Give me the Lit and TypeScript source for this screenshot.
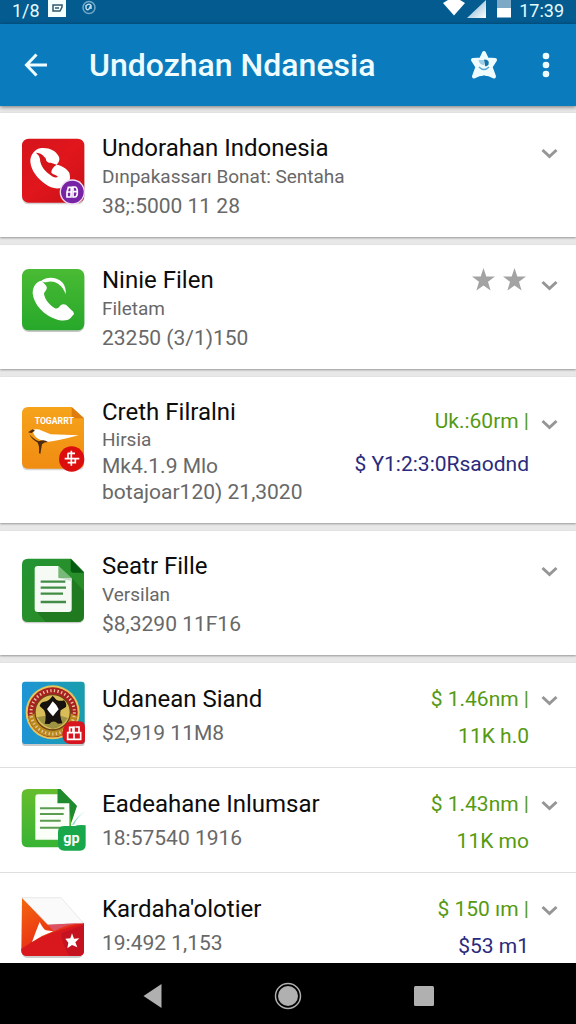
import { LitElement, html, css, svg, nothing, TemplateResult } from "lit";
import { customElement, property } from "lit/decorators.js";

type Tone = "green" | "navy";

interface Entry {
  icon: string;
  name: string;
  sub?: string;
  lines: string[];
  amounts?: { text: string; tone: Tone }[];
  stars?: number;
  dense?: boolean;
}

const cards: Entry[] = [
  { icon: "redPhone", name: "Undorahan Indonesia", sub: "Dınpakassarı Bonat: Sentaha", lines: ["38;:5000 11 28"] },
  { icon: "greenPhone", name: "Ninie Filen", sub: "Filetam", lines: ["23250 (3/1)150"], stars: 2 },
  {
    icon: "bird",
    name: "Creth Filralni",
    sub: "Hirsia",
    lines: ["Mk4.1.9 Mlo", "botajoar120) 21,3020"],
    amounts: [
      { text: "Uk.:60rm |", tone: "green" },
      { text: "$ Y1:2:3:0Rsaodnd", tone: "navy" },
    ],
    dense: true,
  },
  { icon: "sheet", name: "Seatr Fille", sub: "Versilan", lines: ["$8,3290 11F16"] },
];

const rows: Entry[] = [
  {
    icon: "emblem",
    name: "Udanean Siand",
    lines: ["$2,919 11M8"],
    amounts: [
      { text: "$ 1.46nm |", tone: "green" },
      { text: "11K h.0", tone: "green" },
    ],
  },
  {
    icon: "sheetBadge",
    name: "Eadeahane Inlumsar",
    lines: ["18:57540 1916"],
    amounts: [
      { text: "$ 1.43nm |", tone: "green" },
      { text: "11K mo", tone: "green" },
    ],
  },
  {
    icon: "envelope",
    name: "Kardaha'olotier",
    lines: ["19:492 1,153"],
    amounts: [
      { text: "$ 150 ım |", tone: "green" },
      { text: "$53 m1", tone: "navy" },
    ],
  },
];

const frame = (viewBox: string, body: TemplateResult) =>
  html`<svg class="app-icon" viewBox=${viewBox} aria-hidden="true">${body}</svg>`;

const icons: Record<string, () => TemplateResult> = {
  redPhone: () =>
    frame(
      "63 69 195 201",
      svg`<defs><linearGradient id="rp" x1="0" y1="0" x2="1" y2="1"><stop offset="0" stop-color="#d6141c"/><stop offset=".5" stop-color="#e0161c"/><stop offset="1" stop-color="#c91017"/></linearGradient></defs>
      <rect x="66" y="76" width="187" height="192" rx="20" fill="#9b9b9b" opacity=".45"/>
      <rect x="66" y="71" width="187" height="192" rx="20" fill="url(#rp)"/>
      <path d="M91 140C90 121 104 101 124 99C147 97 167 106 176 124C181 135 176 143 170 149C181 150 200 160 207 172C213 187 210 201 199 209C184 225 156 223 137 208C112 190 93 166 91 140Z" fill="#fff"/>
      <path d="M108 113C118 112 132 121 138 132C137 139 145 144 152 143L170 149C159 156 154 164 154 173C160 179 168 178 174 185C168 191 156 185 147 177C131 165 120 148 120 132Q118 121 108 113Z" fill="#d6151b"/>
      <circle cx="217" cy="231" r="38" fill="#f4dff4"/><circle cx="217" cy="231" r="34" fill="#7723a6"/>
      <path d="M214 217h-9l-4 14v15h12zM202 231h11M219 216h5q8 0 8 15t-8 15h-5ZM219 230h13" fill="none" stroke="#fff" stroke-width="5"/>`
    ),
  greenPhone: () =>
    frame(
      "63 84 195 201",
      svg`<defs><linearGradient id="gp" x1="0" y1="0" x2="0" y2="1"><stop offset="0" stop-color="#4abb34"/><stop offset="1" stop-color="#27a82a"/></linearGradient></defs>
      <rect x="66" y="86" width="187" height="184" rx="20" fill="#999" opacity=".55"/>
      <rect x="66" y="81" width="187" height="184" rx="20" fill="url(#gp)"/>
      <path d="M124 116C142 102 172 105 188 122Q199 136 197 157Q190 135 174 125Q158 115 138 121L129 121Z" fill="#fff"/>
      <path d="M124 116C108 119 98 134 98 154C101 188 133 220 166 231C185 238 203 237 211 229L222 216Q222 209 214 204L198 188Q188 184 182 190Q174 202 165 199C145 187 133 169 132 154L140 141Q142 134 136 128Q130 122 124 116Z" fill="#fff"/>`
    ),
  bird: () =>
    frame(
      "63 93 195 201",
      svg`<defs><linearGradient id="bd" x1="0" y1="0" x2="0" y2="1"><stop offset="0" stop-color="#f6a31b"/><stop offset="1" stop-color="#f08c12"/></linearGradient></defs>
      <path d="M84 112H215L252 146V278Q252 298 232 298H84Q66 298 66 278V132Q66 112 84 112Z" fill="#999" opacity=".4"/>
      <path d="M84 108H215L252 142V274Q252 293 232 293H84Q66 293 66 274V128Q66 108 84 108Z" fill="url(#bd)"/>
      <path d="M215 108L252 142H222Q215 142 215 132Z" fill="#e07b10"/>
      <text x="104" y="160" font-family="Roboto, sans-serif" font-size="26" font-weight="700" fill="#fff">TOGARRT</text>
      <path d="M98 177Q112 172 126 179L152 190L236 193Q180 208 140 213L120 206Q100 198 98 177Z" fill="#fff"/>
      <path d="M84 184L98 175L105 179L94 186ZM88 190Q102 206 117 211Q132 204 144 213Q132 213 126 220L121 249L117 246Q119 224 112 214Q96 206 88 190Z" fill="#4b2a10"/>
      <circle cx="215" cy="264" r="38" fill="#dc0d0d"/>
      <path d="M203 247H225M214 239V284M194 263H238M204 247V263M226 263V275H203" fill="none" stroke="#fff" stroke-width="5"/>`
    ),
  sheet: () =>
    frame(
      "63 105 195 201",
      svg`<defs><linearGradient id="sh" x1="0" y1="0" x2="1" y2="1"><stop offset="0" stop-color="#239433"/><stop offset="1" stop-color="#2c8a22"/></linearGradient></defs>
      <path d="M84 116H213L252 156V288Q252 307 232 307H84Q66 307 66 288V135Q66 116 84 116Z" fill="#999" opacity=".5"/>
      <path d="M84 113H213L252 153V284Q252 303 232 303H84Q66 303 66 284V132Q66 113 84 113Z" fill="url(#sh)"/>
      <path d="M212 113L252 155H220Q212 155 212 146Z" fill="#075c13"/>
      <path d="M108 270L137 303H232Q252 303 252 284V210L216 172V270Z" fill="#1a701d" opacity=".65"/>
      <path d="M113 135H175L215 174V264Q215 273 206 273H113Q104 273 104 264V144Q104 135 113 135Z" fill="#f5faf5"/>
      <path d="M175 135L215 171H175Z" fill="#78b878"/><path d="M175 171H215V180Z" fill="#c9dccb"/>
      <path d="M122 182H196M122 200H198M122 218H189M122 243H198" stroke="#438c45" stroke-width="7"/>`
    ),
  emblem: () =>
    frame(
      "63 60 195 201",
      svg`<defs><linearGradient id="em" x1="0" y1="0" x2="1" y2="0"><stop offset="0" stop-color="#1e95d6"/><stop offset="1" stop-color="#199dac"/></linearGradient></defs>
      <rect x="66" y="71" width="188" height="187" rx="9" fill="#888" opacity=".45"/>
      <rect x="66" y="65" width="188" height="187" rx="9" fill="url(#em)"/>
      <circle cx="158" cy="157" r="81" fill="#e6c65c"/><circle cx="158" cy="157" r="75" fill="#a8201f"/>
      <path d="M84 168A75 75 0 0 0 232 168L210 160H106Z" fill="#b98b1d"/>
      <circle cx="158" cy="157" r="65" fill="none" stroke="#e8c4a0" stroke-width="9" stroke-dasharray="4 7"/>
      <circle cx="158" cy="157" r="53" fill="#d8bd59" stroke="#704317" stroke-width="4"/>
      <path d="M111 172Q131 201 158 207Q182 205 204 174L184 168H132Z" fill="#9d9342"/>
      <path d="M158 107L169 119Q180 125 192 121Q201 130 198 141L182 151Q178 165 187 190L174 191Q160 178 148 192L134 191Q141 167 132 150L119 138Q121 127 132 125Q148 123 158 107Z" fill="#17120d"/>
      <path d="M158 124Q171 135 176 148Q168 157 159 169Q147 157 141 147Q148 140 158 124Z" fill="#fff"/>
      <path d="M211 184H239Q255 184 255 202V239Q255 252 240 252H209Q187 249 187 222Q189 190 211 184Z" fill="#d8141f"/>
      <path d="M209 218V202H219V218M226 201H237V218M222 199V239M203 218H242V238H203Z" fill="none" stroke="#fff" stroke-width="5"/>`
    ),
  sheetBadge: () =>
    frame(
      "63 45 195 201",
      svg`<defs><linearGradient id="sb" x1="0" y1="0" x2="0" y2="1"><stop offset="0" stop-color="#66bd2d"/><stop offset="1" stop-color="#38b334"/></linearGradient></defs>
      <path d="M84 57H180L229 106L213 160V232H84Q65 232 65 214V76Q65 57 84 57Z" fill="url(#sb)"/>
      <path d="M173 57H181L231 108L214 158L206 102H173Z" fill="#208a2e"/>
      <path d="M114 73H172V100H208V209H106V82Q106 73 114 73Z" fill="#fafff7"/>
      <path d="M120 115H193M120 132H191M120 152H182M120 173H190" stroke="#5a9d51" stroke-width="6"/>
      <path d="M216 164Q230 140 257 122Q232 140 222 164Z" fill="#8ed9c5"/>
      <path d="M192 168H225Q235 164 257 166V225Q257 241 240 242H193Q174 241 174 224V186Q174 168 192 168Z" fill="#18a84b"/>
      <text x="190" y="219" font-family="Roboto, sans-serif" font-size="43" font-weight="700" fill="#fff">gp</text>`
    ),
  envelope: () =>
    frame(
      "63 60 195 201",
      svg`<defs><linearGradient id="ev" x1="0" y1="0" x2=".7" y2="1"><stop offset="0" stop-color="#f36a10"/><stop offset=".5" stop-color="#ed3e12"/><stop offset="1" stop-color="#d5161b"/></linearGradient></defs>
      <path d="M66 86L250 165V245Q250 264 230 264H84Q66 264 66 245Z" fill="#999" opacity=".5"/>
      <path d="M66 83L252 160V242Q252 258 232 258H84Q64 258 64 242Z" fill="url(#ev)"/>
      <path d="M96 216Q150 186 252 160V242Q252 258 232 258H84Q64 258 64 242V236Z" fill="#d8181c"/>
      <path d="M184 190L252 165V242Q252 258 232 258H208Q183 218 184 190Z" fill="#c51220"/>
      <path d="M66 83H183L250 159L144 164Z" fill="#fafafa" stroke="#e0e0e0" stroke-width="2"/>
      <path d="M144 164L250 159Q200 162 161 184Z" fill="#dc5264"/>
      <path d="M119 156Q130 178 138 181L160 184Q125 196 96 216Q106 188 119 156Z" fill="#fff"/>
      <path d="M216 190L222 206L238 205L226 217L232 232L216 225L202 235L205 218L196 206L211 205Z" fill="#fff"/>`
    ),
};

const base = css`
  * {
    box-sizing: border-box;
  }
  button {
    margin: 0;
    padding: 0;
    border: 0;
    background: none;
    color: inherit;
    display: flex;
    align-items: center;
    justify-content: center;
    cursor: pointer;
  }
`;

@customElement("entry-row")
export class EntryRow extends LitElement {
  @property({ attribute: false }) entry!: Entry;

  static styles = [
    base,
    css`
      :host {
        display: block;
      }
      .row {
        display: flex;
        align-items: flex-start;
        padding: 20px 18px 16px 21px;
      }
      .app-icon {
        width: 65px;
        height: 67px;
        margin: 5px 16px 0 0;
        flex: none;
        overflow: visible;
      }
      .main {
        flex: 1;
        min-width: 0;
        white-space: nowrap;
      }
      .name {
        margin: 0;
        font-size: 24px;
        line-height: 30px;
        font-weight: 400;
        color: #0c0c0c;
      }
      .sub,
      .line {
        margin: 0;
        color: #686868;
      }
      .sub {
        font-size: 19px;
        line-height: 28px;
      }
      .line {
        font-size: 21px;
        line-height: 30px;
      }
      .side {
        display: flex;
        flex-direction: column;
        align-items: flex-end;
        gap: 7px;
        white-space: nowrap;
        font-size: 21px;
        line-height: 30px;
      }
      .amount {
        margin: 0;
      }
      .green {
        color: #559a12;
      }
      .navy {
        color: #2b2a7c;
      }
      .stars {
        display: flex;
        gap: 8px;
        padding: 3px 3px 0 0;
      }
      .star {
        width: 23px;
        height: 23px;
        fill: #a3a3a3;
      }
      .toggle {
        width: 18px;
        height: 40px;
        margin-left: 11px;
      }
      .chevron {
        width: 17px;
        height: 11px;
        fill: none;
        stroke: #969696;
        stroke-width: 3;
      }
      .dense {
        padding-bottom: 18px;
      }
      .dense .sub,
      .dense .line {
        line-height: 26px;
      }
      .dense .side {
        gap: 13px;
        padding-top: 9px;
      }
      .dense .toggle {
        margin-top: 7px;
      }
      .plain {
        padding: 17px 18px 16px 21px;
      }
      .plain .app-icon {
        margin-top: 0;
      }
      .plain .main,
      .plain .side {
        padding-top: 4px;
      }
      .plain .line {
        padding-top: 4px;
      }
    `,
  ];

  render() {
    const e = this.entry;
    const kind = e.dense ? "row dense" : e.sub ? "row" : "row plain";
    return html`<article class=${kind}>
      ${icons[e.icon]()}
      <div class="main">
        <h2 class="name">${e.name}</h2>
        ${e.sub ? html`<p class="sub">${e.sub}</p>` : nothing}
        ${e.lines.map((l) => html`<p class="line">${l}</p>`)}
      </div>
      <div class="side">
        ${e.stars
          ? html`<div class="stars">
              ${Array.from(
                { length: e.stars },
                () => html`<svg class="star" viewBox="0 0 23 23" aria-hidden="true">
                  <path d="M11.5 0L14.3 8.6H23L16 13.8L18.6 22.6L11.5 17.4L4.4 22.6L7 13.8L0 8.6H8.7Z" />
                </svg>`
              )}
            </div>`
          : nothing}
        ${e.amounts?.map((a) => html`<p class="amount ${a.tone}">${a.text}</p>`)}
      </div>
      <button class="toggle" aria-label="Expand ${e.name}">
        <svg class="chevron" viewBox="0 0 17 11"><path d="M1.5 2L8.5 8.5L15.5 2" /></svg>
      </button>
    </article>`;
  }
}

@customElement("app-root")
export class AppRoot extends LitElement {
  static styles = [
    base,
    css`
      :host {
        display: flex;
        flex-direction: column;
        height: 100vh;
        overflow: hidden;
        background: #e8e8e8;
        font-family: Roboto, "Liberation Sans", sans-serif;
      }
      .status {
        flex: none;
        display: flex;
        align-items: flex-start;
        height: 24px;
        padding: 0 12px;
        background: #035b90;
        color: #e3fbff;
        font-size: 18px;
        line-height: 21px;
      }
      .status-left {
        width: 26px;
        margin-right: 10px;
        white-space: nowrap;
      }
      .status-icons {
        width: 50px;
        height: 24px;
      }
      .signals {
        width: 68px;
        height: 24px;
        margin: 0 8px 0 auto;
      }
      .bar {
        flex: none;
        display: flex;
        align-items: center;
        height: 82px;
        padding: 0 18px 0 20px;
        background: #0a7cbd;
        color: #effcff;
        box-shadow: 0 1px 4px rgba(0, 0, 0, 0.5);
        z-index: 1;
      }
      .back {
        width: 32px;
        height: 48px;
      }
      .title {
        flex: 1;
        margin: 0 0 0 37px;
        font-size: 32px;
        line-height: 40px;
        font-weight: 500;
        white-space: nowrap;
      }
      .fav {
        width: 36px;
        height: 48px;
      }
      .more {
        width: 24px;
        height: 48px;
        margin-left: 32px;
      }
      .list {
        flex: 1;
        min-height: 0;
        overflow: hidden;
        display: flex;
        flex-direction: column;
        gap: 8px;
        padding-top: 7px;
      }
      .card {
        flex: none;
        background: #fff;
        box-shadow: 0 1px 2px rgba(0, 0, 0, 0.35);
      }
      .divided {
        border-top: 1px solid #dfdfe2;
      }
      .nav {
        flex: none;
        display: flex;
        justify-content: center;
        height: 61px;
        background: #000;
        z-index: 1;
      }
      .nav-button {
        flex: 0 1 136px;
      }
      .nav-icon {
        width: 30px;
        height: 30px;
        margin-top: 4px;
      }
    `,
  ];

  render() {
    return html`
      <div class="status">
        <span class="status-left">1/8</span>
        <svg class="status-icons" viewBox="0 0 50 24" aria-hidden="true">
          <path d="M0 0H18V17H0Z" fill="#f4ffff" />
          <path d="M5 5H14V7L12 11H5ZM7 8H11" fill="none" stroke="#31586f" stroke-width="1.5" />
          <circle cx="41" cy="7.500" r="6" fill="none" stroke="#73a9c9" stroke-width="1.500" />
          <path d="M38 5V8Q39 11 41 9L43 5V9M43 5Q40 3 38 6" fill="none" stroke="#b9dbe9" stroke-width="1.500" />
        </svg>
        <svg class="signals" viewBox="0 0 68 24" aria-hidden="true">
          <defs>
            <linearGradient id="cell" x1="0" y1="0" x2="1" y2="1">
              <stop offset=".35" stop-color="#9fc6dc" />
              <stop offset="1" stop-color="#fff" />
            </linearGradient>
          </defs>
          <path d="M0 3L5 0H17L22 3L11 15.500Z" fill="#fff" />
          <path d="M24 18L43 0V18Z" fill="url(#cell)" />
          <path d="M54 0H68V8H54Z" fill="#7da9c6" />
          <path d="M54 8H68V17.500H54Z" fill="#fff" />
        </svg>
        <span>17:39</span>
      </div>
      <header class="bar">
        <button class="back" aria-label="Back">
          <svg width="24" height="24" viewBox="0 0 24 24" fill="none" stroke="currentColor" stroke-width="3">
            <path d="M12.500 1.500L2.500 12L12.500 22.500M2.500 12H23" />
          </svg>
        </button>
        <h1 class="title">Undozhan Ndanesia</h1>
        <button class="fav" aria-label="Favourite">
          <svg width="28" height="30" viewBox="0 0 28 30">
            <path
              d="M14 3L17 9.500L25 10L20.500 17L24 26.500Q14 21 4 26.500L7.500 17L3 10L11 9.500Z"
              fill="#effcff"
              stroke="#effcff"
              stroke-width="4"
              stroke-linejoin="round"
            />
            <path d="M9 17Q14 22 19 17" fill="none" stroke="#5aa9d4" stroke-width="1.500" />
            <path d="M14 9.500Q20 9.500 18.500 14.500Q17 17 15 16Z" fill="#1674aa" />
            <path d="M8.500 10H14V15Q9.500 15 8.500 10Z" fill="#9ecee5" />
            <path d="M7.500 28.500Q14 22.500 20.500 28.500Z" fill="#0a7cbd" />
          </svg>
        </button>
        <button class="more" aria-label="More options">
          <svg width="8" height="26" viewBox="0 0 8 26" fill="currentColor">
            <circle cx="4" cy="4" r="3.300" />
            <circle cx="4" cy="13" r="3.300" />
            <circle cx="4" cy="22" r="3.300" />
          </svg>
        </button>
      </header>
      <main class="list">
        ${cards.map((e) => html`<section class="card"><entry-row .entry=${e}></entry-row></section>`)}
        <section class="card">
          ${rows.map((e, i) => html`<entry-row class=${i ? "divided" : ""} .entry=${e}></entry-row>`)}
        </section>
      </main>
      <nav class="nav">
        <button class="nav-button" aria-label="Back">
          <svg class="nav-icon" viewBox="0 0 30 30"><path d="M6.500 15L24.500 3V27Z" fill="#b0b0b0" /></svg>
        </button>
        <button class="nav-button" aria-label="Home">
          <svg class="nav-icon" viewBox="0 0 30 30">
            <circle cx="15" cy="15" r="12.500" fill="none" stroke="#b0b0b0" stroke-width="1.500" />
            <circle cx="15" cy="15" r="10" fill="#b0b0b0" />
          </svg>
        </button>
        <button class="nav-button" aria-label="Recent apps">
          <svg class="nav-icon" viewBox="0 0 30 30"><rect x="5" y="5" width="20" height="20" rx="1.500" fill="#b0b0b0" /></svg>
        </button>
      </nav>
    `;
  }
}
